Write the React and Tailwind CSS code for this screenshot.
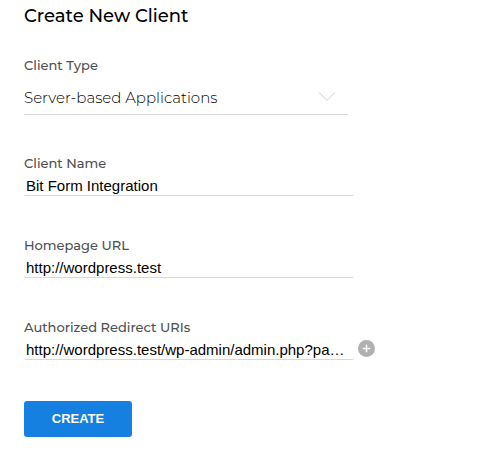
import { useState } from "react";

const labelClass =
  "block font-['Montserrat','Inter',sans-serif] text-[13px] leading-[18px] font-medium text-[#505050]";
const inputClass =
  "block h-6 w-full rounded-xs border-b border-[#d8d8d8] bg-transparent px-0.5 pt-[5px] pb-px font-['Liberation_Sans',Arial,sans-serif] text-[15px] leading-[17px] text-ellipsis text-black outline-none";

function TextField({ id, label, value, onChange, action }) {
  return (
    <div>
      <label htmlFor={id} className={labelClass}>
        {label}
      </label>
      <div className="flex items-center gap-1">
        <div className="w-full max-w-[330px]">
          <input
            id={id}
            type="text"
            className={inputClass}
            value={value}
            onChange={(e) => onChange(e.target.value)}
          />
        </div>
        {action}
      </div>
    </div>
  );
}

export default function App() {
  const [name, setName] = useState("Bit Form Integration");
  const [homepage, setHomepage] = useState("http://wordpress.test");
  const [redirect, setRedirect] = useState(
    "http://wordpress.test/wp-admin/admin.php?page=bitform"
  );

  return (
    <main className="min-h-screen bg-white px-6 font-['Montserrat','Inter',sans-serif] text-black">
      <h1 className="mb-6 text-lg leading-8 font-medium">Create New Client</h1>
      <form onSubmit={(e) => e.preventDefault()}>
        <div className="mb-[39px]">
          <label htmlFor="client-type" className={labelClass}>
            Client Type
          </label>
          <div className="relative max-w-[324px]">
            <select
              id="client-type"
              className="block h-[41px] w-full appearance-none border-b border-[#d8d8d8] bg-transparent pt-[9px] text-[15px] font-light text-black outline-none"
            >
              <option>Server-based Applications</option>
            </select>
            <svg
              className="pointer-events-none absolute top-[17px] right-3 h-3 w-[18px]"
              viewBox="0 0 18 12"
              fill="none"
              stroke="#d0d0d0"
              aria-hidden="true"
            >
              <path d="M1 1.5 L9 9.5 L17 1.5" />
            </svg>
          </div>
        </div>
        <div className="flex flex-col gap-10">
          <TextField id="client-name" label="Client Name" value={name} onChange={setName} />
          <TextField id="homepage" label="Homepage URL" value={homepage} onChange={setHomepage} />
          <TextField
            id="redirect"
            label="Authorized Redirect URIs"
            value={redirect}
            onChange={setRedirect}
            action={
              <button type="button" aria-label="Add redirect URI" className="shrink-0">
                <svg className="block size-[17px]" viewBox="0 0 18 18" aria-hidden="true">
                  <circle cx="9" cy="9" r="9" fill="#b0b0b0" />
                  <path d="M9 5 V13 M5 9 H13" stroke="#ffffff" strokeWidth="1.5" />
                </svg>
              </button>
            }
          />
        </div>
        <button
          type="submit"
          className="mt-[41px] block h-9 w-[108px] rounded-[3px] bg-[#1580e0] font-['Liberation_Sans',Arial,sans-serif] text-[13px] font-bold text-white"
        >
          CREATE
        </button>
      </form>
    </main>
  );
}
